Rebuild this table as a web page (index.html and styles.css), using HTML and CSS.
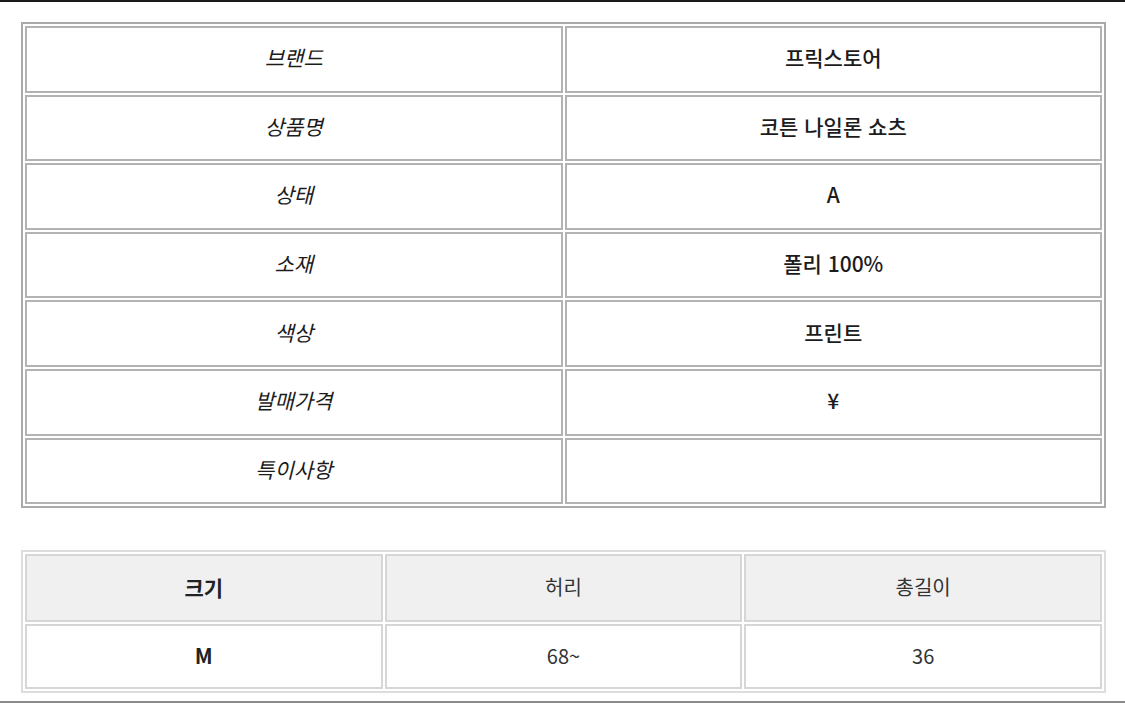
FILE: index.html
```html
<!DOCTYPE html>
<html lang="ko">
<head>
<meta charset="utf-8">
<link rel="stylesheet" href="styles.css">
</head>
<body>
<div class="top-rule"></div>
<main class="content">
  <table class="info">
    <tbody>
      <tr><td class="label">브랜드</td><td class="value">프릭스토어</td></tr>
      <tr><td class="label">상품명</td><td class="value">코튼 나일론 쇼츠</td></tr>
      <tr><td class="label">상태</td><td class="value">A</td></tr>
      <tr><td class="label">소재</td><td class="value">폴리 100%</td></tr>
      <tr><td class="label">색상</td><td class="value">프린트</td></tr>
      <tr><td class="label">발매가격</td><td class="value">¥</td></tr>
      <tr><td class="label">특이사항</td><td class="value"></td></tr>
    </tbody>
  </table>
  <table class="size">
    <thead>
      <tr><th class="strong">크기</th><th>허리</th><th>총길이</th></tr>
    </thead>
    <tbody>
      <tr><td class="strong">M</td><td>68~</td><td>36</td></tr>
    </tbody>
  </table>
</main>
<div class="bottom-rule"></div>
</body>
</html>
```
FILE: styles.css
```css
html, body {
  margin: 0;
  padding: 0;
  background: #ffffff;
}
body {
  font-family: "Noto Sans CJK KR", "Noto Sans", sans-serif;
  color: #222;
  width: 1125px;
  height: 704px;
  overflow: hidden;
  display: flex;
  flex-direction: column;
}
.top-rule {
  flex: 0 0 2px;
  background: #1a1a1a;
}
.content {
  flex: 1 1 auto;
  padding: 20px 19px 0 21px;
  display: flex;
  flex-direction: column;
  gap: 42px;
}
.bottom-rule {
  flex: 0 0 2px;
  background: #8a8a8a;
  margin-bottom: 1px;
}
table {
  width: 1085px;
  table-layout: fixed;
  border-collapse: separate;
  border-spacing: 2px;
}
.info {
  border: 2px solid #a9a9a9;
}
.info tr {
  height: 66.6px;
}
.info td {
  width: 50%;
  height: 59px;
  padding: 0 0 3px;
  border: 2px solid #b3b3b3;
  text-align: center;
  vertical-align: middle;
  line-height: 1.2;
}
.label {
  font-style: italic;
  font-size: 21px;
  font-weight: 400;
  color: #1c1c1c;
}
.value {
  font-size: 21px;
  font-weight: 500;
  color: #1c1c1c;
}
.size {
  border: 2px solid #dddddd;
}
.size th,
.size td {
  padding: 0 0 2px;
  border: 2px solid #d6d6d6;
  text-align: center;
  vertical-align: middle;
  font-size: 20px;
  font-weight: 400;
  color: #333;
  line-height: 1.2;
}
.size th {
  height: 62px;
  background: #f0f0f0;
}
.size td {
  height: 59px;
  background: #ffffff;
}
.size .strong {
  font-weight: 700;
  font-size: 21px;
  color: #222;
}
```
